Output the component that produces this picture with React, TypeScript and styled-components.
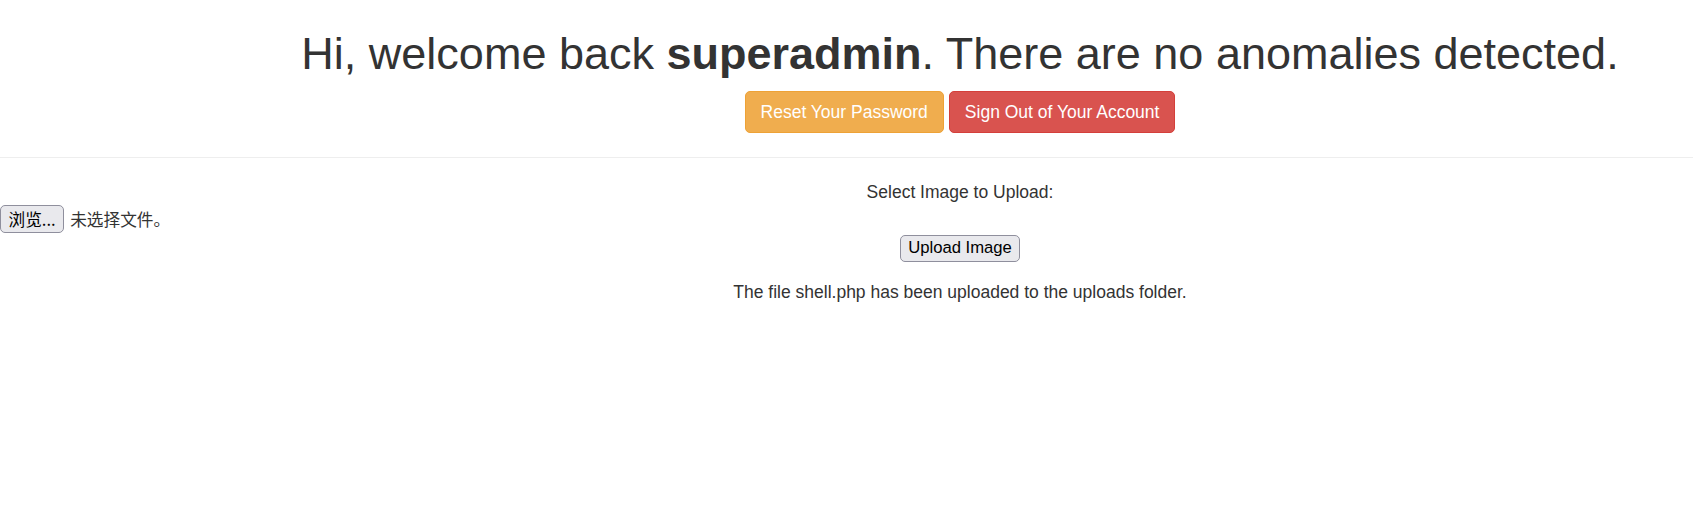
import React from "react";
import styled, { createGlobalStyle } from "styled-components";

const Global = createGlobalStyle`
  html, body {
    margin: 0;
    padding: 0;
    background: #fff;
    overflow: hidden;
  }
  body {
    font-family: "Liberation Sans", Arial, "Noto Sans CJK SC", sans-serif;
    font-size: 17.5px;
    line-height: 25px;
    color: #333;
  }
`;

const Page = styled.div`
  width: 1920px;
`;

const Header = styled.header`
  padding-top: 29px;
  padding-bottom: 23.5px;
  border-bottom: 1px solid #eee;
  text-align: center;
`;

const Title = styled.h1`
  margin: 0;
  font-size: 45px;
  line-height: 49.5px;
  font-weight: 400;
  color: #333;
  b {
    font-weight: 700;
  }
`;

const Actions = styled.div`
  margin-top: 12.5px;
  display: flex;
  justify-content: center;
  gap: 5px;
`;

const ActionButton = styled.a<{ $tone: "warning" | "danger" }>`
  display: inline-block;
  padding: 7.5px 15px;
  font-size: 17.5px;
  line-height: 25px;
  border-radius: 5px;
  border: 1.25px solid ${(p) => (p.$tone === "warning" ? "#eea236" : "#d43f3a")};
  background: ${(p) => (p.$tone === "warning" ? "#f0ad4e" : "#d9534f")};
  color: #fff;
  text-decoration: none;
  cursor: pointer;
`;

const UploadForm = styled.form`
  margin-top: 22px;
  text-align: center;
`;

const Label = styled.div`
  line-height: 25px;
`;

const FileRow = styled.div`
  display: flex;
  align-items: center;
  gap: 6px;
  height: 29px;
  text-align: left;
`;

const NativeButton = styled.button`
  box-sizing: border-box;
  font-family: "Liberation Sans", Arial, "Noto Sans CJK SC", sans-serif;
  font-size: 16.67px;
  line-height: 20px;
  color: #000;
  background: #e9e9ed;
  border: 1.25px solid #8f8f9d;
  border-radius: 5px;
  padding: 0 7.5px;
  height: 27.5px;
`;

const BrowseButton = styled(NativeButton)`
  font-family: "Noto Sans CJK SC", sans-serif;
  height: 28.5px;
`;

const NoFile = styled.span`
  font-family: "Noto Sans CJK SC", sans-serif;
  font-size: 16.67px;
  color: #333;
`;

const SubmitRow = styled.div`
  margin-top: 1px;
  height: 27.5px;
`;

const Message = styled.p`
  margin: 18px 0 0;
`;

export default function App() {
  return (
    <>
      <Global />
      <Page>
        <Header>
          <Title>
            Hi, welcome back <b>superadmin</b>. There are no anomalies detected.
          </Title>
          <Actions>
            <ActionButton $tone="warning">Reset Your Password</ActionButton>
            <ActionButton $tone="danger">Sign Out of Your Account</ActionButton>
          </Actions>
        </Header>
        <UploadForm onSubmit={(e) => e.preventDefault()}>
          <Label>Select Image to Upload:</Label>
          <FileRow>
            <BrowseButton type="button">浏览...</BrowseButton>
            <NoFile>未选择文件。</NoFile>
          </FileRow>
          <SubmitRow>
            <NativeButton type="submit">Upload Image</NativeButton>
          </SubmitRow>
          <Message>The file shell.php has been uploaded to the uploads folder.</Message>
        </UploadForm>
      </Page>
    </>
  );
}
